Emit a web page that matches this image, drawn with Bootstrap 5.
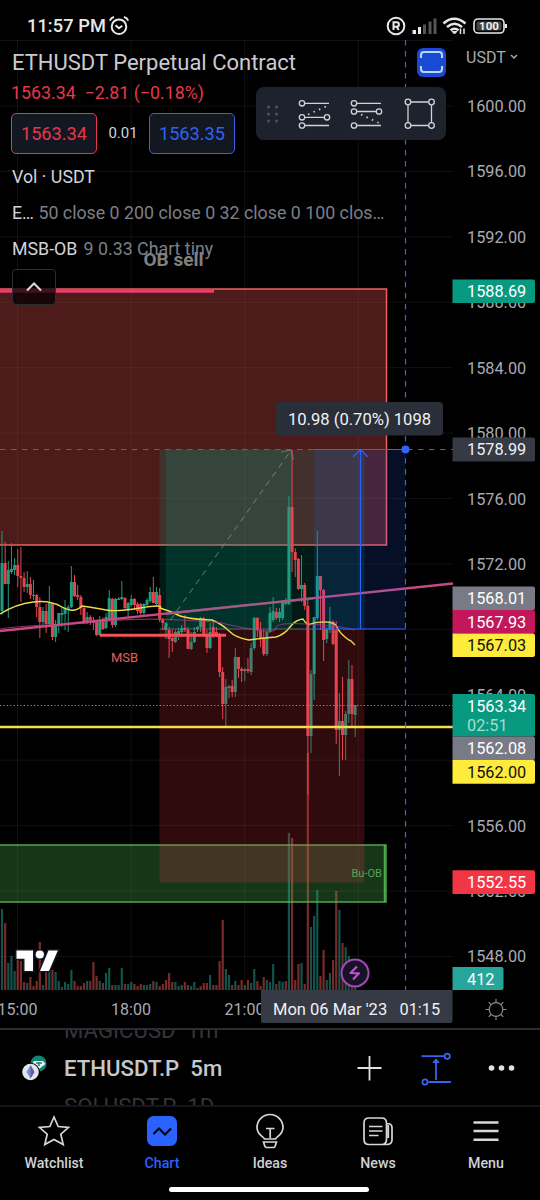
<!DOCTYPE html>
<html lang="en">
<head>
<meta charset="utf-8">
<meta name="viewport" content="width=device-width, initial-scale=1">
<title>ETHUSDT Perpetual Contract</title>
<link href="https://cdn.jsdelivr.net/npm/bootstrap@5.3.0/dist/css/bootstrap.min.css" rel="stylesheet">
<style>
body{background:#000;color:#d1d4dc;font-family:Roboto,"Liberation Sans",sans-serif;line-height:1}
.screen{width:540px;height:1200px;overflow:hidden}
.status-bar{height:40px;padding:13px 32px 0 27px;color:#e8e8e8}
.clock{font-size:18.2px;font-weight:500;letter-spacing:.1px;padding-top:4px}
.alarm{margin:4px 0 0 3px;overflow:visible}
.chart-area{height:988px}
.legend-block{top:0;left:0;width:452px;padding:13px 0 0 11px}
.sym-title{font-size:22px;line-height:20px;padding-left:1px;color:#c9cbd1}
.quote{font-size:17.8px;line-height:20px;margin-top:10px;color:#e5384a}
.trade{width:86px;height:41px;font-size:18.2px;background:#131722;border-radius:5px;padding:1px 0 0;line-height:1;border-width:1px}
.sell{color:#e5384a;border-color:#e5384a}
.buy{color:#2f62ee;border-color:#3d5fe0}
.qty{font-size:15px;width:52px;text-align:center}
.quote-row{margin-top:10px}
.studies{padding-top:13px}
.study{font-size:17.8px;line-height:20px;height:36px;padding-left:1px;white-space:nowrap;color:#d1d4dc}
.study span{color:#7c7f88}
.collapse-btn{left:12px;top:229px;width:44px;height:36px;background:rgba(0,0,0,.72);border:1px solid #2c2e34;border-radius:4px}
.draw-bar{left:256px;top:47px;width:190px;height:53px;background:#1e222d;border-radius:8px}
.full-btn{left:417px;top:8px;width:29px;height:29px;background:#194ad4;border-radius:6px}
.currency{left:466px;top:9px;font-size:16px;line-height:18px;color:#a9abb2}
.symbol-bar{height:79px;border-top:2px solid #2c2d33;border-bottom:2px solid #15161d;padding-left:22px;overflow:hidden}
.wheel{width:270px;font-size:22.2px;line-height:38px;margin-left:17px;white-space:nowrap}
.wheel b{font-weight:500;color:#c6c8ce}
.ghost{color:#34353a}
.tabs-row{padding-top:6px}
.tab-item{width:108px;font-size:14.2px;font-weight:500;color:#cfd1d6;text-decoration:none}
.tab-item.on{color:#2962ff}
.tab-item svg{width:36px;height:36px;margin-bottom:7px}
.home-line{width:200px;height:5px;border-radius:3px;background:#fff;margin-right:3px}
</style>
<script src="https://cdn.jsdelivr.net/npm/bootstrap@5.3.0/dist/js/bootstrap.bundle.min.js"></script>
</head>
<body>
<div class="screen d-flex flex-column">
  <header class="status-bar d-flex justify-content-between align-items-start">
    <div class="d-flex">
      <span class="clock">11:57 PM</span>
      <svg class="alarm" width="20" height="20" viewBox="0 0 20 20" fill="none" stroke="#e8e8e8" stroke-width="2"><g transform="translate(0,-.8)"><circle cx="10" cy="10.500" r="7.300"/><path d="M6.500 9l3.500 3 3.200-2.500M.8 4.500Q2 1.500 5 .8M15 .8q3 .7 4.200 3.700"/></g></svg>
    </div>
    <svg width="126" height="24" viewBox="0 0 126 24" fill="none" stroke="#e8e8e8" style="margin-top:2px;margin-right:-2px">
      <g stroke-width="2"><circle cx="12" cy="11" r="8.300"/><path d="M9.500 15V7.300h3.200a2 2 0 0 1 0 4.400H9.500M12.500 11.700l2.300 3.300"/></g>
      <g stroke="none" fill="#e8e8e8"><path d="M28.500 15h3.500v4h-3.500zM34 12h3v7h-3z"/><path fill="#555" d="M39 9.500h3V19h-3zM44.500 6.500h3V19h-3zM49.500 3.500h3V19h-3z"/></g>
      <g stroke-width="2.400"><path d="M59.500 8.500q10.500-9.500 22 0M63 12q7.500-6.500 15 0M66.500 15.300q4-3.300 8 0"/></g>
      <path d="M68 16.500h5L70.500 19z" fill="#e8e8e8"/><path d="M76.500 13.500v5.500M80 13.500v5.500" stroke-width="1.500"/>
      <rect x="90" y="4" width="30" height="14" rx="4" stroke-width="1.600"/><rect x="92.500" y="6.500" width="25" height="9" rx="2" fill="#444" stroke="none"/><path d="M122 9v4" stroke-width="2"/>
      <text x="105" y="15.300" font-size="11.500" font-weight="700" text-anchor="middle" fill="#f1f1f1" stroke="none">100</text>
    </svg>
  </header>

  <main class="chart-area position-relative flex-shrink-0">
    <svg id="chart" class="d-block" width="540" height="988" viewBox="0 40 540 988" font-family="Roboto,sans-serif">
      <g id="grid" stroke="#fff" stroke-opacity=".065"></g>
      <g id="volume"></g>
      <rect x="-2" y="289" width="388.500" height="256" fill="#ef5350" fill-opacity=".32" stroke="#f0605f" stroke-width="1.500"/>
      <path d="M0 291.300H214" stroke="#e83e70" stroke-width="3"/>
      <rect x="-2" y="845" width="388" height="57" fill="#4caf50" fill-opacity=".3" stroke="#5cae5a" stroke-width="1.400"/>
      <path d="M384.500 845v57" stroke="#4caf50" stroke-width="1.500"/>
      <rect x="159.500" y="629" width="205" height="253.500" fill="#f23645" fill-opacity=".2"/>
      <rect x="159.500" y="449.500" width="205" height="179.500" fill="#089981" fill-opacity=".17"/>
      <rect x="166" y="449.500" width="126" height="179.500" fill="#089981" fill-opacity=".2"/>
      <g id="candles"></g>
      <path d="M0 614Q16 604 33 602T62 607 82 606Q96 608 106 610T140 608 160 608Q170 611 178 615T212 620Q222 624 229 631T249 640Q262 638 276 637 285 634 290 627T303 619Q307 626 311 624T325 622 337 627 345 637 350 640L355 645" fill="none" stroke="#ecd94b" stroke-width="1.400"/>
      <path d="M0 629Q20 626 50 625T110 621 180 620 222 623 250 629 276 628 306 624 336 626L355 630" fill="none" stroke="#a33a7b" stroke-width="1.200" stroke-opacity=".8"/>
      <path d="M0 631L453 583.500" stroke="#c94a83" stroke-width="2.400"/>
      <path d="M166 613.700L313 598.500" stroke="#8a6585" stroke-width="2.400" stroke-opacity=".7"/>
      <path d="M160 629H314" stroke="#7b7688" stroke-opacity=".7"/>
      <path d="M100 635.300H226" stroke="#f4525a" stroke-width="3"/>
      <path d="M164 629L291 450.500" stroke="#85988f" stroke-opacity=".75" stroke-dasharray="6 5"/>
      <path d="M281 452l10-2 2.500 10" fill="none" stroke="#85988f" stroke-opacity=".6"/>
      <path d="M0 705.500H453" stroke="#79a18e" stroke-dasharray="1.200 2.200"/>
      <path d="M0 727H453" stroke="#f8dc4d" stroke-width="2.400"/>
      <rect x="314" y="449.500" width="91.500" height="179.500" fill="#2962ff" fill-opacity=".15"/>
      <path d="M314 449.500h91.500M314 629h91.500M360.500 629V450M353 457l7.500-7.500 7.500 7.500" fill="none" stroke="#2962ff" stroke-width="1.200"/>
      <path d="M0 449.500H453M405.500 40V990" fill="none" stroke="#3f5cff" stroke-width="1.200" stroke-dasharray="5.500 5.500"/>
      <circle cx="405.500" cy="449.500" r="4" fill="#2f66ff"/>
      <text x="111" y="662" font-size="13" fill="#ea5b5f">MSB</text>
      <text x="351.500" y="876.500" font-size="11" fill="#56a653">Bu-OB</text>
      <text x="143.500" y="266" font-size="19" font-weight="700" fill="#808080">OB sell</text>
      <g fill="#fff" stroke="#131722" stroke-width="3" paint-order="stroke"><path d="M16.500 950.500H33V971h-8.500v-12.300h-8zM48.500 950.500h9.300L49 971h-9z"/><circle cx="39.800" cy="954.500" r="4.100"/></g>
      <circle cx="355" cy="973" r="13.500" fill="#181226" stroke="#a04ab5" stroke-width="2"/>
      <path d="M357 966.500l-6.500 6.500 8.500.300-6 6.200" fill="none" stroke="#bb57cb" stroke-width="2.200" stroke-linejoin="round"/>
      <rect x="276" y="402" width="167" height="33.500" rx="4" fill="#2a2e39"/>
      <text x="359.500" y="424.500" font-size="16.600" text-anchor="middle" fill="#f0f1f4">10.98 (0.70%) 1098</text>
      <g id="axis" font-size="16.300"></g>
      <g font-size="16" fill="#a9abb2" text-anchor="middle"><text x="17.500" y="1015">15:00</text><text x="131" y="1015">18:00</text><text x="244.500" y="1015">21:00</text></g>
      <path d="M261 990H452.500V1021q0 2-2 2H263q-2 0-2-2z" fill="#363a45"/>
      <text x="273" y="1015" font-size="16.500" fill="#f0f1f4">Mon 06 Mar '23</text><text x="399.500" y="1015" font-size="16.300" fill="#f0f1f4">01:15</text>
      <g stroke="#85878d" stroke-width="1.200" fill="none" transform="translate(496 1009.500)"><circle r="6.800"/><path d="M0-7v-3.500M0 7v3.500M-7 0h-3.500M7 0h3.500M-5-5l-2.300-2.300M5 5l2.300 2.300M-5 5l-2.300 2.300M5-5l2.300-2.300"/></g>
    </svg>

    <section class="legend-block position-absolute">
      <div class="sym-title">ETHUSDT Perpetual Contract</div>
      <div class="quote">1563.34&nbsp; −2.81 (−0.18%)</div>
      <div class="quote-row d-flex align-items-center">
        <button class="btn trade sell">1563.34</button><span class="qty">0.01</span><button class="btn trade buy">1563.35</button>
      </div>
      <div class="studies">
        <div class="study">Vol · USDT</div>
        <div class="study">E… <span>50 close 0 200 close 0 32 close 0 100 clos…</span></div>
        <div class="study">MSB-OB <span>&#8202;9 0.33 Chart tiny</span></div>
      </div>
    </section>
    <button class="collapse-btn position-absolute p-0 d-flex justify-content-center align-items-center" aria-label="Collapse"><svg width="18" height="12" viewBox="0 0 18 12"><path d="M2 9.500l7-7 7 7" fill="none" stroke="#dcdde0" stroke-width="2"/></svg></button>
    <div class="full-btn position-absolute"><svg class="d-block" width="29" height="29" viewBox="0 0 29 29" fill="none" stroke="#c5d3fb" stroke-width="2"><path d="M4 10V7q0-3 3-3h15q3 0 3 3v3M4 18v3q0 3 3 3h15q3 0 3-3v-3"/></svg></div>
    <div class="currency position-absolute">USDT <svg width="8" height="6" viewBox="0 0 8 6" style="margin-left:1px;vertical-align:3px"><path d="M1 1l3 3 3-3" fill="none" stroke="#a9abb2" stroke-width="1.500"/></svg></div>
    <div class="draw-bar position-absolute">
      <svg class="d-block" width="190" height="53" viewBox="256 87 190 53" fill="none" stroke="#d0d2d8" stroke-width="1.300">
        <g fill="#50535e" stroke="none"><circle cx="268.500" cy="107" r="1.500"/><circle cx="276.500" cy="107" r="1.500"/><circle cx="268.500" cy="114" r="1.500"/><circle cx="276.500" cy="114" r="1.500"/><circle cx="268.500" cy="121" r="1.500"/><circle cx="276.500" cy="121" r="1.500"/></g>
        <circle cx="302" cy="103.300" r="2.700"/><path d="M305 103.300h24M305 117.300h19.200M305 125.500h24"/><circle cx="302" cy="117.300" r="2.700"/><circle cx="327" cy="117.300" r="2.700"/><circle cx="302" cy="125.500" r="2.700"/><path d="M308 114.500l18-8" stroke-dasharray="1.500 4.500" stroke-width="1.700"/>
        <circle cx="354" cy="103.300" r="2.700"/><path d="M357 103.300h24M357 111.500h19.200M357 125.500h24"/><circle cx="354" cy="111.500" r="2.700"/><circle cx="379" cy="111.500" r="2.700"/><circle cx="354" cy="125.500" r="2.700"/><path d="M361 114.500l18 8.500" stroke-dasharray="1.500 4.500" stroke-width="1.700"/>
        <path d="M411 102h17.500M411 125.500h17.500M408 105v17.500M431.500 105v17.500"/><circle cx="408" cy="102" r="2.800"/><circle cx="431.500" cy="102" r="2.800"/><circle cx="408" cy="125.500" r="2.800"/><circle cx="431.500" cy="125.500" r="2.800"/>
      </svg>
    </div>
  </main>

  <section class="symbol-bar d-flex align-items-center flex-shrink-0">
    <svg width="25" height="28" viewBox="0 0 25 28"><circle cx="16.500" cy="9.500" r="8" fill="#168275"/><path d="M12 7h9l2.500 3-6.500 5-7-5z" fill="#e6f3f1"/><path d="M14 9h6M17 9v3" stroke="#168275" stroke-width="1.500"/><circle cx="8.500" cy="18" r="9.300" fill="#000"/><circle cx="8.500" cy="18" r="8.300" fill="#e4e5ec"/><path d="M8.500 11l4 7-4 6.500-4-6.500z" fill="#8189cf"/><path d="M8.500 11v13.500l4-6.500z" fill="#5962ad"/></svg>
    <div class="wheel"><div class="ghost">MAGICUSD&nbsp; 1m</div><b>ETHUSDT.P&nbsp; 5m</b><div class="ghost">SOLUSDT.P&nbsp; 1D</div></div>
    <svg width="180" height="40" viewBox="354 1048 180 40" fill="none" style="margin-left:20px"><path d="M357.500 1068h24M369.500 1056v24.500" stroke="#e0e1e4" stroke-width="1.800"/><g stroke="#3564ee" stroke-width="1.800"><path d="M421.500 1056.200H444M428.500 1082H451M436 1080V1061"/><circle cx="447.200" cy="1056.200" r="2.600"/><circle cx="425" cy="1082" r="2.600"/><path d="M433 1062.500l3-3.500 3 3.500z" fill="#3564ee" stroke-width="1"/></g><g fill="#e0e1e4"><circle cx="491.500" cy="1068" r="2.800"/><circle cx="501.500" cy="1068" r="2.800"/><circle cx="511.500" cy="1068" r="2.800"/></g></svg>
  </section>

  <nav class="tabs-row d-flex text-center flex-grow-1">
    <a class="tab-item" href="#"><svg viewBox="0 0 36 36"><path d="M18 4l4.200 9.500 10.300 1-7.700 6.700 2.400 10.300L18 26.500l-9.200 5 2.400-10.300-7.700-6.700 10.300-1z" fill="none" stroke="#d6d7da" stroke-width="1.700"/></svg><div>Watchlist</div></a>
    <a class="tab-item on" href="#"><svg viewBox="0 0 36 36"><rect x="3" y="3" width="30" height="30" rx="6.500" fill="#2962ff"/><path d="M9.500 21l5.500-5.500 6 6 6-6" fill="none" stroke="#000" stroke-width="2"/></svg><div>Chart</div></a>
    <a class="tab-item" href="#"><svg viewBox="0 0 36 36" fill="none" stroke="#d6d7da" stroke-width="1.700"><path d="M12.500 26c0-1.500-7.500-4-7.500-11.500a13 13 0 0 1 26 0C31 22 23.500 24.500 23.500 26zM11.500 29h13l-1.300 4q-.4 1.500-1.700 1.500h-7q-1.300 0-1.700-1.500zM14 15.500h8.500M18.200 15.500V25"/></svg><div>Ideas</div></a>
    <a class="tab-item" href="#"><svg viewBox="0 0 36 36" fill="none" stroke="#d6d7da" stroke-width="1.700"><path d="M9 5h12.500q5 0 5 5v16.500q0 5-5 5H9q-5 0-5-5V10q0-5 5-5zM27 10.500q5 0 5 4v12.500q0 4.500-5.500 4.500h-5M28.300 12v13M9 13.500h13.500M9 18h13.500M9 22.500h9.500"/></svg><div>News</div></a>
    <a class="tab-item" href="#"><svg viewBox="0 0 36 36"><path d="M5.500 9.500h25M5.500 18h25M5.500 26.800h25" stroke="#d6d7da" stroke-width="2.500"/></svg><div>Menu</div></a>
  </nav>
  <div class="d-flex justify-content-center pb-2"><div class="home-line"></div></div>
</div>

<script>
const NS='http://www.w3.org/2000/svg';
const add=(id,tag,a,text)=>{const e=document.createElementNS(NS,tag);for(const k in a)e.setAttribute(k,a[k]);if(text)e.textContent=text;document.getElementById(id).appendChild(e)};
const yOf=p=>106+(1600-p)*16.355;
[17.5,131.2,244.7,358.3].forEach(x=>add('grid','path',{d:`M${x} 40V990`}));
add('grid','path',{d:'M0 40.5H453'});
// levels whose label sits wholly behind price tags get a grid line only
const covered=[1568,1560];
for(let p=1600;p>=1548;p-=4){add('grid','path',{d:`M0 ${yOf(p)}H453`});if(!covered.includes(p))add('axis','text',{x:467,y:yOf(p)+6,fill:'#a9abb2'},p.toFixed(2))}

// side, high, low, body top, body bottom: one five-minute bar per row
const bars=`g531 615 563 611|r542 584 563 584|g561 618 570 584|g543 574 569 572|g558 575 565 570|r549 587 565 576|r547 602 576 578|r572 592 578 587|g571 593 584 587|r577 599 584 595|r580 600 595 596|r594 617 595 607|r597 638 607 622|g607 625 611 622|r604 633 611 624|g586 625 603 624|r603 640 603 637|g620 642 625 637|g613 633 613 625|g607 627 613 615|g600 630 608 614|g605 632 607 609|g566 608 582 607|r575 597 582 596|r585 600 595 597|r595 615 597 608|r607 624 608 623|g612 624 617 623|r615 625 617 620|r617 630 620 623|r620 636 622 635|g616 636 620 635|r617 630 620 629|g613 629 617 628|g590 620 598 619|r598 628 599 625|g598 627 599 625|g597 600 598.5 600|g581 600 597 599|r597 610 598 608|g602 617 603 609|g595 607 599 605|r598 610 599 605|r602 614 604 611|r603 617 604 613|g603 615 604 613|g598 607 600 605|g587 603 592 601|r577 603 592 603|g587 607 592 604|r588 622 595 620|r618 630 620 623|g622 639 623 630|r627 658 630 639|r630 652 638 641|g630 643 632 642|g628 640 631 635|g625 637 628 632|r615 632 628 630|r627 649 630 649|g632 650 642 649|g627 643 632 642|g626 632 627 629|g617 632 618 627|r617 637 618 636|r630 653 636 648|g623 649 632 648|r620 638 627 635|r627 637 632 635|r633 677 635 672|r667 719 672 704|g679 726 687 704|g685 698 686 688|r680 697 686 692|g648 697 657 692|r657 678 657 669|r667 682 669 671|g668 681 669 671|r658 673 669 671|g643 675 648 672|g617 650 618 648|r617 637 618 630|r622 647 630 638|r630 656 638 654|g630 656 632 654|g607 633 613 632|g597 622 611 620|r608 620 612 618|g608 622 612 618|g600 620 602 618|g598 605 601 604|g496 605 507 604|r450 572 507 552|r548 577 552 560|r558 590 559 589|g555 602 585 589|r583 610 585 606|r600 795 606 736|g670 753 674 736|g617 700 617 674|g531 620 576 618|r576 630 576 590|r589 661 590 640|g627 643 629 639|g607 633 621 630|r620 645 622 644|r621 744 630 730|g693 776 721 730|r677 760 721 735|g711 760 714 735|g660 723 679 714|r665 727 679 714|g705 737 705 715`.split('|');
const step=3.153;
bars.forEach((b,i)=>{
  const [h,l,t,m]=b.slice(1).split(' ').map(Number),x=2+i*step;
  const c=b[0]==='g'?(h>629?'#4b7b6b':'#229a80'):'#e8434f';
  add('candles','rect',{x:x-.5,y:h,width:1,height:l-h,fill:c});
  add('candles','rect',{x:x-1.5,y:t,width:3,height:Math.max(1,m-t),fill:c});
});

// volume column heights, same bar order
const vols='g81 r67 g27 g34 g19 r30 r29 r8 g7 r13 r4 r9 r48 g5 r18 g22 r20 g18 g9 g3 g8 g6 g20 r9 r4 r4 r7 g9 r9 r28 r14 g9 r7 g17 g22 r5 g5 g5 g22 r6 g6 g8 r6 r4 r6 g5 g5 g6 r9 g8 r4 r6 r10 r17 r8 g8 g4 g5 r8 r5 g4 g8 r2 r4 r7 r7 g15 r5 r5 r29 r70 g21 g15 r5 g9 r5 r10 g5 r10 g7 g21 r9 r4 r13 g10 g8 g26 r6 g9 g8 r9 g157 r152 r10 r26 g27 r6 r237 g63 g74 g100 r14 r40 g10 g17 r30 r99 g80 r47 g43 g34 r9 g5'.split(' ');
vols.forEach((v,i)=>{const h=+v.slice(1);add('volume','rect',{x:2+i*step-1.1,y:990-h,width:2.2,height:h,fill:v[0]==='g'?'#26a69a':'#ef5350','fill-opacity':.5})});

// price tags: label, top, height, fill, text colour
[['1588.69',279.5,23.5,'#089981','#fff'],['1578.99',437.500,24,'#363a45','#f0f1f4'],['1568.01',586.500,23.5,'#787b86','#fff'],['1567.93',610,23.5,'#c2185b','#fff'],['1567.03',633.500,23.5,'#ffeb3b','#111'],['1563.34',694,42.500,'#089981','#fff'],['1562.08',736.500,23.5,'#787b86','#fff'],['1562.00',760,23.700,'#ffeb3b','#111'],['1552.55',870.300,23.700,'#f23645','#fff'],['412',967,23,'#26a69a','#fff']].forEach(([s,y,h,f,c])=>{
  const r=s.length<4?503.500:535;
  add('axis','path',{d:`M452.500 ${y}H${r-2}q2 0 2 2v${h-4}q0 2-2 2H452.500z`,fill:f});
  add('axis','text',{x:467,y:y+17.700,fill:c},s);
});
add('axis','text',{x:467,y:731,fill:'#a5dccf'},'02:51');
</script>
</body>
</html>
